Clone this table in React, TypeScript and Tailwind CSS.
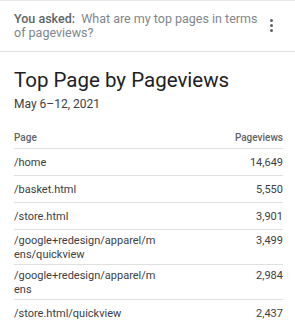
import React from 'react';

const rows = [
  { page: '/home', views: '14,649' },
  { page: '/basket.html', views: '5,550' },
  { page: '/store.html', views: '3,901' },
  { page: '/google+redesign/apparel/mens/quickview', views: '3,499' },
  { page: '/google+redesign/apparel/mens', views: '2,984' },
  { page: '/store.html/quickview', views: '2,437' },
];

const App: React.FC = () => {
  return (
    <div className="w-[295px] h-[324px] overflow-hidden bg-white border-t border-[#e8eaed] font-['Roboto',sans-serif]">
      {/* question */}
      <div className="flex items-start justify-between pl-[14px] pr-[14px] pt-[11px] pb-[12px] border-b border-[#e0e0e0]">
        <p className="w-[250px] text-[12.5px] leading-[13.5px] text-[#80868b]">
          <span className="font-medium text-[#5f6368]">You asked:</span>&nbsp; What are my top pages in terms of pageviews?
        </p>
        <div className="flex flex-col items-center gap-[2px] pt-[7px] pr-[8px]">
          <span className="w-[3px] h-[3px] rounded-full bg-[#5f6368]" />
          <span className="w-[3px] h-[3px] rounded-full bg-[#5f6368]" />
          <span className="w-[3px] h-[3px] rounded-full bg-[#5f6368]" />
        </div>
      </div>

      <div className="pl-[14px] pr-[12px] pt-[14px]">
        <h2 className="text-[20.5px] leading-[28px] text-[#202124]">Top Page by Pageviews</h2>
        <p className="mt-[2px] text-[12px] leading-[16px] text-[#3c4043]">May 6–12, 2021</p>

        <div className="mt-[20px] flex justify-between pb-[4px] border-b border-[#e0e0e0] text-[10px] leading-[12px] font-medium text-[#5f6368]">
          <span>Page</span>
          <span>Pageviews</span>
        </div>

        {rows.map((r, i) => (
          <div key={i} className="flex min-h-[27px] items-center border-b border-[#e0e0e0]">
            <div className="flex w-full items-baseline justify-between pt-[4px] pb-[2px] text-[11px] leading-[14px] text-[#3c4043]">
              <span className="w-[146px] break-all">{r.page}</span>
              <span>{r.views}</span>
            </div>
          </div>
        ))}
      </div>
    </div>
  );
};

export default App;
